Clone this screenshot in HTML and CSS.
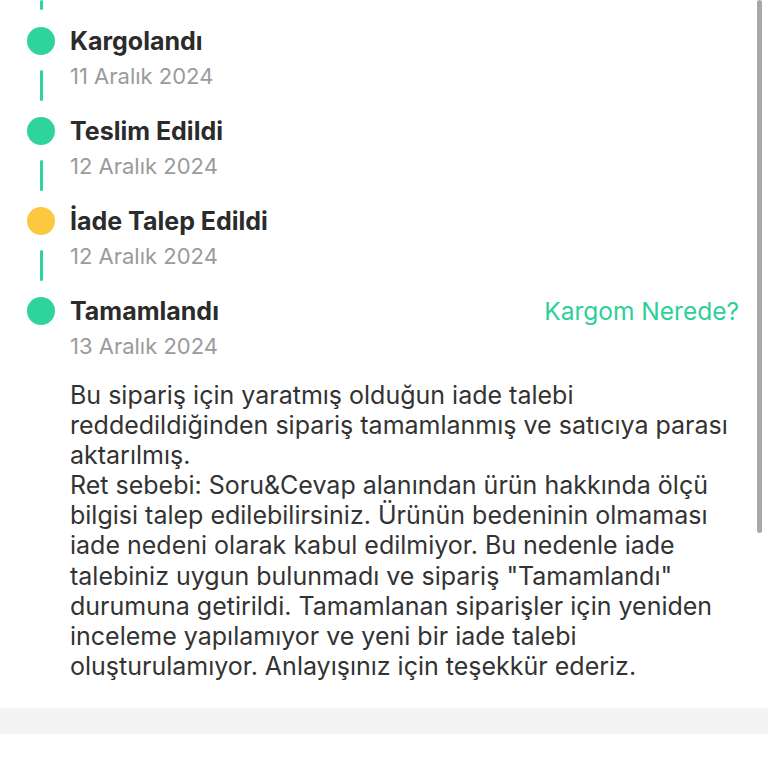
FILE: index.html
```html
<!DOCTYPE html>
<html lang="tr">
<head>
  <meta charset="UTF-8" />
  <meta name="viewport" content="width=device-width, initial-scale=1" />
  <title>Sipariş Durumu</title>
  <link rel="stylesheet" href="styles.css">
</head>
<body>

  <div class="timeline">
    <div class="lead-line"></div>

    <div class="step">
      <div class="rail">
        <span class="dot"></span>
        <span class="line"></span>
      </div>
      <div class="info">
        <div class="title">Kargolandı</div>
        <div class="date">11 Aralık 2024</div>
      </div>
    </div>

    <div class="step">
      <div class="rail">
        <span class="dot"></span>
        <span class="line"></span>
      </div>
      <div class="info">
        <div class="title">Teslim Edildi</div>
        <div class="date">12 Aralık 2024</div>
      </div>
    </div>

    <div class="step">
      <div class="rail">
        <span class="dot dot-warn"></span>
        <span class="line"></span>
      </div>
      <div class="info">
        <div class="title">İade Talep Edildi</div>
        <div class="date">12 Aralık 2024</div>
      </div>
    </div>

    <div class="step step-last">
      <div class="rail">
        <span class="dot"></span>
      </div>
      <div class="info">
        <div class="title-row">
          <div class="title">Tamamlandı</div>
          <a class="track-link" href="#">Kargom Nerede?</a>
        </div>
        <div class="date">13 Aralık 2024</div>
        <p class="note">Bu sipariş için yaratmış olduğun iade talebi<br>
reddedildiğinden sipariş tamamlanmış ve satıcıya parası<br>
aktarılmış.<br>
Ret sebebi: Soru&amp;Cevap alanından ürün hakkında ölçü<br>
bilgisi talep edilebilirsiniz. Ürünün bedeninin olmaması<br>
iade nedeni olarak kabul edilmiyor. Bu nedenle iade<br>
talebiniz uygun bulunmadı ve sipariş "Tamamlandı"<br>
durumuna getirildi. Tamamlanan siparişler için yeniden<br>
inceleme yapılamıyor ve yeni bir iade talebi<br>
oluşturulamıyor. Anlayışınız için teşekkür ederiz.</p>
      </div>
    </div>
  </div>

  <div class="divider"></div>

  <div class="next-section">
    <h3>Ödeme Bilgileri</h3>
  </div>

  <div class="scrollbar"></div>

</body>
</html>
```

FILE: styles.css
```css
body {
  margin: 0;
  background: #fff;
  font-family: Inter, "Noto Sans", sans-serif;
  color: #2b2b2b;
  overflow: hidden;
}
.timeline {
  padding: 0 29px 27px 27px;
}
.lead-line {
  width: 3px;
  height: 10px;
  margin-left: 13px;
  margin-bottom: 17px;
  background: #2fd39c;
  border-radius: 2px;
}
.step {
  display: grid;
  grid-template-columns: 28px 1fr;
  column-gap: 15px;
}
.rail {
  display: flex;
  flex-direction: column;
  align-items: center;
}
.dot {
  width: 28px;
  height: 28px;
  border-radius: 50%;
  background: #2fd39c;
}
.dot-warn {
  background: #fcc83f;
}
.line {
  width: 3px;
  height: 31px;
  margin: 15px 0 16px;
  background: #2fd39c;
  border-radius: 2px;
}
.title-row {
  display: flex;
  justify-content: space-between;
  align-items: center;
}
.title {
  font-size: 25px;
  font-weight: 700;
  line-height: 28px;
  color: #2b2b2b;
}
.date {
  margin-top: 4px;
  font-size: 22px;
  line-height: 34px;
  color: #9b9b9b;
}
.track-link {
  font-size: 24.5px;
  line-height: 28px;
  color: #2ecf98;
  text-decoration: none;
}
.note {
  margin: 17px 0 0;
  font-size: 25px;
  line-height: 30.1px;
  color: #333;
  white-space: nowrap;
}
.divider {
  height: 26px;
  background: #f4f4f4;
}
.next-section {
  padding: 34px 22px 0;
}
.next-section h3 {
  margin: 0;
  font-size: 22px;
  font-weight: 700;
  line-height: 28px;
  color: #2b2b2b;
}
.scrollbar {
  position: absolute;
  top: 0;
  right: 6px;
  width: 5px;
  height: 533px;
  background: #a8a8a8;
  border-radius: 3px;
}
```
